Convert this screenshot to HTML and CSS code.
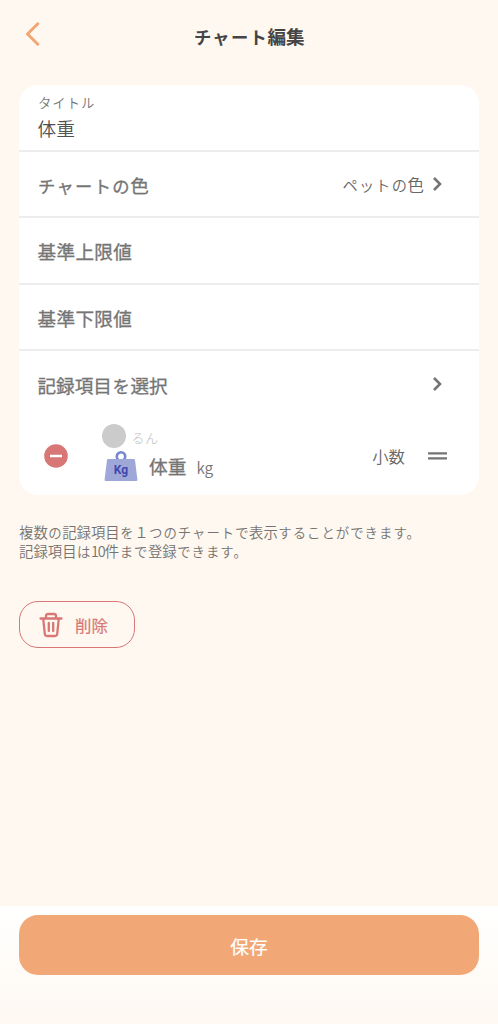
FILE: index.html
```html
<!DOCTYPE html>
<html lang="ja">
<head>
<meta charset="utf-8">
<title>チャート編集</title>
<link rel="stylesheet" href="styles.css">
</head>
<body>
<div class="screen">
  <header class="header">
    <svg class="back" width="16" height="24" viewBox="0 0 16 24"><path d="M13.8 1.800 3.500 12l10.300 10.200"/></svg>
    <h1 class="title"><span class="kana">チャート</span>編集</h1>
  </header>
  <main class="content">
    <section class="card">
      <div class="row field">
        <span class="field-label"><span class="kana">タイトル</span></span>
        <span class="field-value">体重</span>
      </div>
      <div class="row">
        <span class="label"><span class="kana">チャートの</span>色</span>
        <span class="value"><span class="kana">ペットの</span>色</span>
        <svg class="chevron" width="11" height="16" viewBox="0 0 11 16"><path d="m2 2 6 6-6 6"/></svg>
      </div>
      <div class="row"><span class="label wide">基準上限値</span></div>
      <div class="row"><span class="label wide">基準下限値</span></div>
      <div class="row last">
        <span class="label">記録項目<span class="kana">を</span>選択</span>
        <svg class="chevron" width="11" height="16" viewBox="0 0 11 16"><path d="m2 2 6 6-6 6"/></svg>
      </div>
      <div class="item">
        <svg class="remove" width="24" height="24" viewBox="0 0 24 24"><circle cx="12" cy="12" r="11.8"/><path d="M6 12h12"/></svg>
        <div class="item-body">
          <div class="pet"><span class="avatar"></span><span class="pet-name"><span class="kana">るん</span></span></div>
          <div class="metric">
            <svg class="weight" width="34" height="31" viewBox="0 0 34 31">
              <circle cx="17" cy="5.500" r="4.200"/>
              <path d="M4.200 8h25.600q1 0 1.200 1l2.400 19.500q.2 1.500-1.200 1.500H1.800Q.4 30 .6 28.500L3 9q.2-1 1.200-1z"/>
              <text x="17" y="23.400" text-anchor="middle">Kg</text>
            </svg>
            <span class="metric-name">体重</span>
            <span class="unit">kg</span>
          </div>
        </div>
        <span class="format">小数</span>
        <svg class="handle" width="19" height="10" viewBox="0 0 19 10"><path d="M0 2.300h19M0 7.300h19"/></svg>
      </div>
    </section>
    <p class="note">複数<span class="kana">の</span>記録項目<span class="kana">を</span>１<span class="kana">つのチャートで</span>表示<span class="kana">することができます。</span><br>記録項目<span class="kana">は</span><span class="digits">10</span>件<span class="kana">まで</span>登録<span class="kana">できます。</span></p>
    <button class="delete">
      <svg width="24" height="26" viewBox="0 0 24 26"><path d="M1.500 6.500h21M7 6V4q0-2 2-2h6q2 0 2 2v2M4.200 6.500l1.600 15.500q.2 2 2.200 2h8q2 0 2.200-2l1.600-15.500M9.800 11v8M14.200 11v8"/></svg>
      <span>削除</span>
    </button>
  </main>
  <footer class="footer"><button class="save">保存</button></footer>
</div>
</body>
</html>
```
FILE: styles.css
```css
* {
  box-sizing: border-box;
}

body {
  margin: 0;
  font-family: "Noto Sans CJK JP", sans-serif;
  color: #757575;
}

svg {
  display: block;
  flex: none;
  fill: none;
  stroke-linecap: round;
  stroke-linejoin: round;
}

button {
  font: inherit;
  cursor: pointer;
}

/* Kana set slightly smaller than kanji on the same advance width. */
.kana {
  padding-left: 0.035em;
  margin-right: -0.035em;
  font-size: 0.93em;
  line-height: 1;
  letter-spacing: 0.075em;
}

.screen {
  display: flex;
  flex-direction: column;
  height: 1024px;
  background: #fef8f1;
}

.header {
  display: grid;
  grid-template-columns: 40px 1fr 40px;
  align-items: start;
  height: 85px;
  padding: 22px 24px 0;
}

.back {
  stroke: #f2a773;
  stroke-width: 3;
}

.title {
  margin: 0;
  text-align: center;
  font-size: 18.6px;
  line-height: 27px;
  font-weight: 700;
  color: #454545;
}

.content {
  flex: 1;
  padding: 0 19px;
}

.card {
  height: 410px;
  border-radius: 19px;
  background: #fff;
  overflow: hidden;
}

.row {
  display: flex;
  align-items: center;
  height: 66.3px;
  padding: 0 36px 0 18.5px;
  border-bottom: 2px solid #ededed;
}

.row.field {
  flex-direction: column;
  align-items: flex-start;
  height: 67px;
  padding-top: 7px;
  white-space: nowrap;
}

.row.last {
  border-bottom: 0;
}

.field-label {
  font-size: 14.4px;
  line-height: 20px;
  font-weight: 350;
}

.field-value {
  font-size: 18.7px;
  line-height: 31px;
  font-weight: 350;
  color: #505050;
}

.label {
  flex: 1;
  padding-top: 2px;
  font-size: 18.6px;
  line-height: 28px;
  font-weight: 400;
  -webkit-text-stroke: 0.3px #757575;
}

.label.wide {
  letter-spacing: 0.35px;
}

.value {
  padding: 0 8px 0 0;
  font-size: 16.4px;
  line-height: 24px;
  font-weight: 350;
  color: #666;
}

.chevron {
  stroke: #757575;
  stroke-width: 2.6;
  stroke-linecap: butt;
  stroke-linejoin: miter;
}

.item {
  display: flex;
  align-items: center;
  height: 77px;
  padding: 0 32px 0 25px;
}

.remove circle {
  fill: #d87775;
}

.remove path {
  stroke: #fff;
  stroke-width: 2.4;
  stroke-linecap: butt;
}

.item-body {
  flex: 1;
  padding: 0 0 3px 34px;
}

.pet {
  display: flex;
  align-items: center;
  height: 24px;
}

.avatar {
  width: 24px;
  height: 24px;
  border-radius: 50%;
  background: #cbcbcb;
}

.pet-name {
  padding: 2px 0 0 5px;
  font-size: 13.8px;
  line-height: 20px;
  font-weight: 300;
  color: #bdbdbd;
  white-space: nowrap;
}

.metric {
  display: flex;
  align-items: center;
  height: 37px;
  padding-left: 2px;
}

.weight circle {
  stroke: #7885d0;
  stroke-width: 2.6;
}

.weight path {
  fill: #9fa7d9;
}

.weight text {
  font-family: Roboto, sans-serif;
  font-size: 12px;
  font-weight: 700;
  fill: #3f48ad;
}

.metric-name {
  padding-left: 11px;
  font-size: 18.7px;
  line-height: 28px;
  font-weight: 400;
  -webkit-text-stroke: 0.3px #757575;
}

.unit {
  padding: 1px 0 0 10px;
  font-size: 15.5px;
  line-height: 24px;
  font-weight: 350;
}

.format {
  padding: 0 23px 0 0;
  font-size: 16.4px;
  line-height: 24px;
  font-weight: 350;
  color: #666;
}

.handle {
  stroke: #757575;
  stroke-width: 2.3;
  stroke-linecap: butt;
}

.note {
  margin: 28px 0 0;
  font-size: 14.4px;
  line-height: 18.7px;
  font-weight: 350;
  color: #757370;
}

.digits {
  letter-spacing: -1px;
}

.delete {
  display: flex;
  align-items: center;
  gap: 12px;
  width: 116px;
  height: 47px;
  margin-top: 41px;
  padding: 0 0 0 19px;
  border: 1.4px solid #d87775;
  border-radius: 19px;
  background: transparent;
  color: #d87775;
  font-size: 16.4px;
  font-weight: 400;
}

.delete span {
  -webkit-text-stroke: 0.2px #d87775;
}

.delete svg {
  stroke: #d87775;
  stroke-width: 2.3;
}

.footer {
  height: 118px;
  padding: 9px 19px 0;
  background: linear-gradient(#fff, #fef8f1);
}

.save {
  display: block;
  width: 100%;
  height: 60px;
  padding: 0;
  border: 0;
  border-radius: 19px;
  background: #f2a876;
  color: #fff;
  font-size: 18.7px;
  font-weight: 400;
  -webkit-text-stroke: 0.2px #fff;
}
```
